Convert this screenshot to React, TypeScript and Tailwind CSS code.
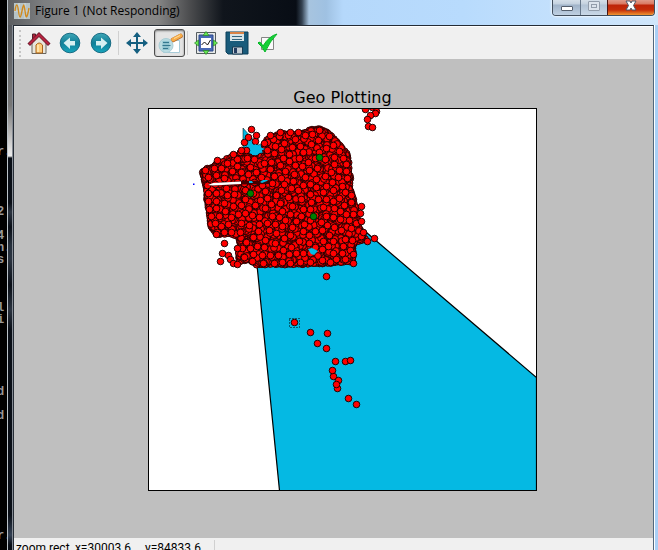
import React from "react";

type Pt = [number, number];

const CONSOLE_LINES = ["r.", "", "", "", "", "2", "", "4", "n.", "s", "", "", "", "l", "i", "", "", "", "", "", "d", "", "d", "", "", "", "", "", "", "", "", "", "r."];

const REGION: Pt[] = [
  [203, 171], [217, 165], [230, 158], [241, 155], [248, 157], [254, 159], [267, 156],
  [265, 146], [267, 140], [272, 137], [280, 134], [290, 135], [303, 134], [310, 131], [318, 129],
  [326, 132], [332, 137], [339, 145], [346, 153], [348, 162], [348, 170], [350, 178], [349, 188],
  [353, 199], [356, 210], [357, 222], [361, 234], [365, 239], [354, 241], [352, 254], [352, 261],
  [341, 262], [325, 263], [290, 264], [256, 264], [249, 259], [240, 261], [239, 253], [241, 245],
  [239, 236], [229, 233], [217, 234], [211, 226], [209, 210], [207, 195], [207, 188], [205, 180],
];

const LOOSE: Pt[] = [
  [217, 160], [233, 154], [240, 152], [246, 150], [241, 150], [244, 142], [248, 137], [255, 141], [256, 135], [251, 129],
  [216, 234], [224, 243], [222, 253], [228, 255], [230, 259], [220, 261], [233, 263], [237, 264], [237, 248],
  [264, 143], [270, 135], [280, 132], [290, 132], [298, 132], [361, 206], [360, 213], [361, 221], [363, 232], [374, 238], [367, 241],
  [353, 254], [353, 263], [326, 276], [294, 322], [310, 332], [327, 333], [317, 343], [326, 348], [335, 361], [345, 361], [350, 360],
  [333, 376], [332, 370], [338, 380], [337, 388], [336, 384], [348, 398], [356, 404],
  [365, 109], [372, 107], [376, 111], [375, 113], [370, 115], [367, 119], [368, 126], [372, 127],
];

const GREEN: Pt[] = [[319, 157], [250, 193], [313, 216]];

function inside([x, y]: Pt, poly: Pt[]) {
  let hit = false;
  for (let i = 0, j = poly.length - 1; i < poly.length; j = i++) {
    const [xi, yi] = poly[i];
    const [xj, yj] = poly[j];
    if (yi > y !== yj > y && x < ((xj - xi) * (y - yi)) / (yj - yi) + xi) hit = !hit;
  }
  return hit;
}

function scatter(): Pt[] {
  let seed = 4217;
  const rand = () => {
    seed = (seed * 1664525 + 1013904223) % 4294967296;
    return seed / 4294967296;
  };
  const out: Pt[] = [];
  REGION.forEach(([x, y], i) => {
    const [nx, ny] = REGION[(i + 1) % REGION.length];
    const steps = Math.ceil(Math.hypot(nx - x, ny - y) / 3);
    for (let s = 0; s < steps; s++) {
      const jitter = rand() * 1.5 - 0.75;
      out.push([x + ((nx - x) * s) / steps + jitter, y + ((ny - y) * s) / steps + jitter]);
    }
  });
  while (out.length < 4200) {
    const p: Pt = [200 + rand() * 170, 126 + rand() * 140];
    if (inside(p, REGION)) out.push([Math.round(p[0]), Math.round(p[1])]);
  }
  // The last dots keep their distance from each other, so each shows as a whole disc.
  const top: Pt[] = [];
  for (let n = 0; n < 6000; n++) {
    const p: Pt = [Math.round(200 + rand() * 170) + 0.5, Math.round(126 + rand() * 140) + 0.5];
    if (inside(p, REGION) && top.every(([x, y]) => Math.hypot(x - p[0], y - p[1]) > 6.5)) top.push(p);
  }
  return out.concat(top);
}

const DOTS = scatter();

function Plot() {
  return (
    <svg viewBox="148 108 389 383" className="block w-[389px] max-w-full" role="img" aria-label="Geo Plotting">
      <defs>
        <clipPath id="axes"><rect x="148" y="108" width="389" height="383" /></clipPath>
      </defs>
      <rect x="148" y="108" width="389" height="383" fill="#fff" />
      <g clipPath="url(#axes)">
        <path d="M255 245 L279.500 490.500 H536.500 V377.500 L360 227Z" fill="#05b9e3" stroke="#000" strokeWidth="1.2" />
        <path d="M243 128 L250 136 L258 145 L268 142 L270 156 L253 160 L243 152Z" fill="#05b9e3" stroke="#000" strokeWidth="0.5" />
        <rect x="193" y="183.500" width="1.500" height="1.500" fill="#00f" />
        <g fill="red" stroke="#100" strokeWidth="0.9">
          {DOTS.map(([x, y], i) => <circle key={i} cx={x} cy={y} r="3.400" />)}
          {LOOSE.map(([x, y], i) => <circle key={i} cx={x + 0.5} cy={y + 0.5} r="3.300" />)}
        </g>
        <path d="M207 185 L213 183 L241 181 L270 180.500 V184 L241 184.500 L213 186Z" fill="#400" />
        <path d="M208 185 L213 183 L241 181.500 V184 L213 185.500Z" fill="#fff" />
        <path d="M249 181 h3 l1 2 h-4z M260 182 l3-2 5 0 -1 1 -5 2z M252 149 l3-5 5 3 5 2 -5 2 -3 4 -5 0z M308 249 l4-1 6 3 -4 4 -3-1z" fill="#05b9e3" />
        <g fill="green" stroke="#020" strokeWidth="0.9">
          {GREEN.map(([x, y], i) => <circle key={i} cx={x + 0.5} cy={y + 0.5} r="3.300" />)}
        </g>
        <rect x="289.500" y="318.500" width="10" height="9" fill="none" stroke="#000" strokeDasharray="1 2" />
      </g>
      <rect x="148.500" y="108.500" width="388" height="382" fill="none" stroke="#000" />
    </svg>
  );
}

function AppIcon() {
  return (
    <svg viewBox="0 0 16 16" className="size-4 shrink-0" aria-hidden="true">
      <rect width="16" height="16" fill="#b7c4c6" />
      <path d="M0 8H16M5 0V16M11 0V16" stroke="#d2dadb" />
      <path d="M1 8 C2 0 3.500 0 4.500 8 S6.500 16 8 8 S10 0 11 8 S13 16 15 5" fill="none" stroke="#d18a1c" strokeWidth="1.4" />
    </svg>
  );
}

function HomeIcon() {
  return (
    <svg viewBox="0 0 24 24" className="size-6" aria-hidden="true">
      <path d="M5.500 3h3v6h-3z" fill="#ad1f38" stroke="#54202a" />
      <path d="M5 12 12 5l7 7v10.500H5z" fill="#e8e6dc" stroke="#69665f" />
      <path d="M9 22V14q3-4 6.500 0v8z" fill="#ffcc78" stroke="#a9641d" />
      <path d="M11 14v7" stroke="#ffe3a7" strokeWidth="2" />
      <path d="M3 12.500 12 3.500 21 12.500" fill="none" stroke="#651b2b" strokeWidth="3.600" strokeLinecap="square" />
      <path d="M3 12.500 12 3.500 21 12.500" fill="none" stroke="#b62340" strokeWidth="2.200" strokeLinecap="square" />
    </svg>
  );
}

function ArrowIcon({ forward = false }: { forward?: boolean }) {
  return (
    <svg viewBox="0 0 24 24" className="size-6" aria-hidden="true">
      <defs>
        <linearGradient id={forward ? "fw" : "bk"} x1="0" y1="0" x2="0" y2="1">
          <stop offset="0" stopColor="#3fa7b7" /><stop offset="0.500" stopColor="#107f98" /><stop offset="1" stopColor="#17a6bd" />
        </linearGradient>
      </defs>
      <circle cx="12" cy="12" r="9.800" fill={forward ? "url(#fw)" : "url(#bk)"} stroke="#176b83" />
      <path d={forward ? "M18.500 12 12 6.500V10H7v4.500h5V18z" : "M5.500 12 12 6.500V10h5v4.500h-5V18z"} fill="#d6f0f2" />
    </svg>
  );
}

function PanIcon() {
  return (
    <svg viewBox="0 0 24 24" className="size-6" aria-hidden="true">
      <path d="M12 4V20M4 12H20" stroke="#155f80" strokeWidth="2" />
      <path d="M12 1l4 5H8zM12 23l4-5H8zM1 12l5-4v8zM23 12l-5-4v8z" fill="#155f80" />
    </svg>
  );
}

function ZoomIcon() {
  return (
    <svg viewBox="0 0 26 24" className="h-6 w-[26px]" aria-hidden="true">
      <path d="M6.500 9.500h16v12h-16z" fill="#fff" stroke="#a8cbd8" />
      <path d="M16 9 23.500 5" stroke="#b5692a" strokeWidth="4.600" strokeLinecap="round" />
      <path d="M16 8.700 23.500 4.700" stroke="#f8ad48" strokeWidth="3.600" strokeLinecap="round" />
      <path d="M17 7.500l6-3" stroke="#ffdc9d" />
      <circle cx="9" cy="14.500" r="7" fill="#b5d9e0" fillOpacity="0.900" stroke="#a9cdd5" />
      <path d="M5.500 10h7v9h-7z" fill="#90c3cf" />
      <path d="M6 11.500h6M5.500 14.500h8M6 17.500h5" stroke="#34788f" strokeWidth="1.200" />
    </svg>
  );
}

function SubplotIcon() {
  return (
    <svg viewBox="0 0 24 24" className="size-6" aria-hidden="true">
      <path d="M2.500 1.500h19v21h-19z" fill="#e5e8e8" stroke="#555d60" />
      <path d="M5 4h14v16H5z" fill="#4869b5" stroke="#2d488a" />
      <path d="M7 7h10v10H7z" fill="#fff" />
      <path d="M7.500 14l3-3 3 3 3-5" fill="none" stroke="#111" />
      <path d="M12 .5l3 4H9zM12 23.500l3-4H9zM.5 12l4-3v6zM23.500 12l-4-3v6z" fill="#65e650" stroke="#27832a" strokeWidth=".7" />
    </svg>
  );
}

function SaveIcon() {
  return (
    <svg viewBox="0 0 24 24" className="size-6" aria-hidden="true">
      <path d="M1 1h22v22H3l-2-2z" fill="#195b7b" stroke="#0d405b" />
      <path d="M5 1h14v9H5z" fill="#d7e4e8" />
      <path d="M5 1h14v2H5z" fill="#d98245" />
      <path d="M7 5.500h10M7 8.500h10" stroke="#35647c" />
      <path d="M7.500 16h10v7h-10z" fill="#c4cdd4" stroke="#183a52" />
      <path d="M9 17h3v5H9z" fill="#233c60" />
    </svg>
  );
}

function CheckIcon() {
  return (
    <svg viewBox="0 0 24 24" className="size-6" aria-hidden="true">
      <path d="M5.500 6.500h12v12h-12z" fill="#fafafa" stroke="#858585" />
      <path d="M3 11q2 0 4 4Q13 5 21 3q-7 7-12 18Q6 15 2 12z" fill="#15cf36" stroke="#05b726" />
    </svg>
  );
}

function Tool({ label, active = false, children }: { label: string; active?: boolean; children: React.ReactNode }) {
  return (
    <button
      type="button"
      aria-label={label}
      aria-pressed={active}
      className={`flex h-7 w-[31px] shrink-0 items-center justify-center ${active ? "rounded-[3px] border border-[#4d4d4d] bg-[#e4e4e4] shadow-[inset_0_1px_2px_#777]" : ""}`}
    >
      {children}
    </button>
  );
}

export default function App() {
  return (
    <div className="flex h-screen overflow-hidden bg-black">
      <pre className="-ml-[3px] w-[10px] shrink-0 overflow-hidden pt-[146px] font-['Liberation_Mono',monospace] text-xs/[12px] font-bold text-[#999]">
        {CONSOLE_LINES.join("\n")}
      </pre>

      <div className="flex min-w-0 flex-1 flex-col">
        <header className="flex h-[25px] shrink-0 justify-between border-l border-[#bac2c8] bg-[linear-gradient(90deg,#5c5e61_0px,#7c7e80_35px,#929292_90px,#858585_150px,#4b4c4e_182px,#10151c_215px,#080d15_288px,#354352_294px,#a7c4df_301px,#9fc1e2_318px,#b5d8fb_335px,#b8dbfd_70%,#d0e6fb_100%)]">
          <div className="flex items-center gap-[5px] self-start pt-[3px] pl-[6px]">
            <AppIcon />
            <h1 className="font-['Open_Sans',sans-serif] text-xs/[16px] text-black">Figure 1 (Not Responding)</h1>
          </div>
          <div className="mr-[3px] flex h-4 overflow-hidden rounded-b-[4px] border border-t-0 border-[#424e5c] shadow-[0_0_2px_1px_#ffffffb0]">
            <button type="button" aria-label="Minimize" className="flex w-7 items-center justify-center border-r border-[#66778a] bg-[linear-gradient(#d5dfe9_0px,#c4d1df_4px,#a0b3c8_5px,#bfd0e2_15px)]">
              <span className="mt-[2px] h-[5px] w-3 rounded-[1px] border border-[#555f6d] bg-white" />
            </button>
            <button type="button" aria-label="Maximize" className="flex w-[26px] items-center justify-center bg-[linear-gradient(#d5dfe9_0px,#c4d1df_4px,#b2c3d5_5px,#c9d8e7_15px)]">
              <span className="mb-[3px] flex h-[10px] w-3 items-center justify-center rounded-[1px] border border-[#929dab] bg-[#dce4ed]">
                <span className="h-1 w-[6px] border border-[#929dab]" />
              </span>
            </button>
            <button type="button" aria-label="Close" className="flex w-[47px] justify-center border-l border-[#481614] bg-[linear-gradient(#df9a89_0px,#d97861_4px,#bd2308_5px,#c52d09_10px,#ef9632_15px)]">
              <svg viewBox="0 0 12 12" className="size-3" aria-hidden="true">
                <path d="M1 1h4l1 2 1-2h4L8.500 5.500 11 10H7L6 8 5 10H1l2.500-4.500z" fill="#fff" stroke="#515766" />
              </svg>
            </button>
          </div>
        </header>

        <div className="flex min-h-0 flex-1">
          <div className="w-[6px] shrink-0 border-l border-r border-l-[#bac2c8] border-r-[#858b94] bg-[linear-gradient(#55585d_0px,#777_80px,#eee_131px,#090e16_133px,#090e16_178px,#2b3440_187px,#090e16_202px,#26303c_220px,#2b3440_234px,#090e16_260px,#2b3440_285px,#090e16_305px,#090e16_490px,#344154_510px,#090e16_520px)]" />
          <main className="flex min-w-0 flex-1 flex-col border-t border-l border-r border-[#252c35] border-r-[#52677c] bg-[#bfbfbf]">
            <div role="toolbar" aria-label="Figure tools" className="flex h-[33px] shrink-0 items-center border-t border-white bg-[#f0f0f0] pl-[5px]">
              <span className="mr-[2px] h-[27px] border-l-2 border-dotted border-[#c5c5c5]" />
              <Tool label="Home"><HomeIcon /></Tool>
              <Tool label="Back"><ArrowIcon /></Tool>
              <Tool label="Forward"><ArrowIcon forward /></Tool>
              <span className="mx-[2px] h-6 border-l border-[#d0d0d0]" />
              <span className="mr-[2px] flex"><Tool label="Pan"><PanIcon /></Tool></span>
              <Tool label="Zoom" active><ZoomIcon /></Tool>
              <span className="mx-[2px] h-6 border-l border-[#d0d0d0]" />
              <Tool label="Configure subplots"><SubplotIcon /></Tool>
              <Tool label="Save"><SaveIcon /></Tool>
              <Tool label="Edit parameters"><CheckIcon /></Tool>
            </div>

            <figure className="flex min-h-0 flex-1 flex-col items-center pt-[29px] pl-[18px]">
              <figcaption className="font-['DejaVu_Sans',sans-serif] text-base/[20px] text-black">Geo Plotting</figcaption>
              <Plot />
            </figure>

            <footer className="flex h-3 shrink-0 items-start overflow-hidden bg-[#f0f0f0] pl-[2px] font-['Roboto',sans-serif] text-xs/[20px] text-black">
              <span className="w-[129px] shrink-0 whitespace-nowrap">zoom rect, x=30003.6</span>
              <span className="w-[69px] shrink-0">y=84833.6</span>
              <span className="mt-[2px] h-4 border-l border-[#d0d0d0]" />
            </footer>
          </main>
          <div className="w-1 shrink-0 border-l border-white bg-[#a9cff5]" />
        </div>
      </div>
    </div>
  );
}
